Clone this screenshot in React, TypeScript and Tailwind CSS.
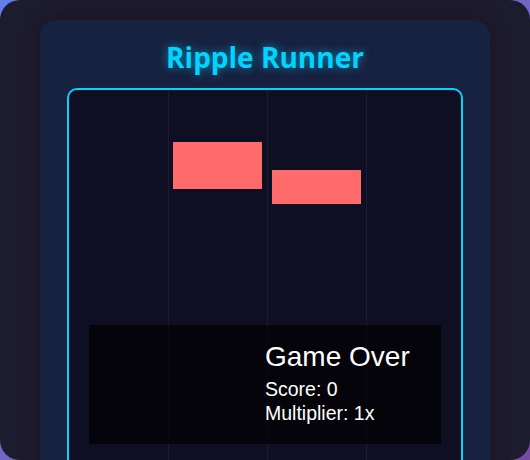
const lanes = [0, 1, 2, 3];

const obstacles = [
  { lane: 1, top: 52, height: 47 },
  { lane: 2, top: 80, height: 34 },
];

export default function App() {
  return (
    <div className="w-[530px] h-[460px] overflow-hidden bg-gradient-to-br from-[#667eea] to-[#764ba2]">
      <div className="w-full h-full rounded-[20px] bg-[#1d1b2e] px-10 pt-5">
        <div className="h-[520px] rounded-2xl bg-[#172140] px-[27px] pt-[18px] shadow-[0_0_20px_rgba(0,0,0,0.25)]">
          <h1
            className="text-center text-[28px] leading-[38px] font-bold text-[#00d4ff] [text-shadow:0_0_10px_rgba(0,212,255,0.6)]"
            style={{ fontFamily: '"Open Sans", "Noto Sans", sans-serif' }}
          >
            Ripple Runner
          </h1>
          <div className="mt-[12px] h-[420px] rounded-[10px] border-2 border-[#00d4ff] bg-[#0e0f22] overflow-hidden relative">
            <div className="flex h-full">
              {lanes.map(i => (
                <div
                  key={i}
                  className={i === 0 ? 'w-[99px] shrink-0' : i === 3 ? 'flex-1 border-l border-[#1b1c30]' : 'w-[99px] shrink-0 border-l border-[#1b1c30]'}
                />
              ))}
            </div>
            {obstacles.map((o, idx) => (
              <div
                key={idx}
                className="absolute w-[89px] bg-[#ff6b6b]"
                style={{ left: o.lane * 99 + 5, top: o.top, height: o.height }}
              />
            ))}
            <div
              className="absolute left-[20px] top-[235px] w-[352px] h-[119px] bg-black/70 text-white"
              style={{ fontFamily: '"Liberation Sans", Arial, sans-serif' }}
            >
              <div className="pl-[176px] pt-[16px]">
                <div className="text-[28px] leading-[32px]">Game Over</div>
                <div className="text-[19.5px] leading-[24px] mt-[4px]">Score: 0</div>
                <div className="text-[19.5px] leading-[24px]">Multiplier: 1x</div>
              </div>
            </div>
          </div>
        </div>
      </div>
    </div>
  );
}
